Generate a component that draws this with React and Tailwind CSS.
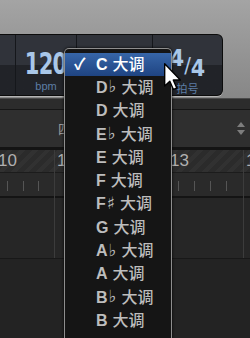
import React from 'react'

const keys = [
  ['C', ''],
  ['D', '♭'],
  ['D', ''],
  ['E', '♭'],
  ['E', ''],
  ['F', ''],
  ['F', '♯'],
  ['G', ''],
  ['A', '♭'],
  ['A', ''],
  ['B', '♭'],
  ['B', ''],
]

const ticks = [7, 23, 38, 69, 85, 100, 116, 131, 147, 178, 194, 210, 226]

function Cursor() {
  return (
    <svg className="absolute left-[164px] top-[63px]" width="18" height="28" viewBox="0 0 13 20">
      <path
        d="M0.5 0.5 L0.5 16.5 L4.2 13 L6.8 19 L9.2 18 L6.7 12.2 L11.8 12.2 Z"
        fill="#fff"
        stroke="#000"
        strokeWidth="1"
        strokeLinejoin="round"
      />
    </svg>
  )
}

export default function App() {
  return (
    <div
      className="relative h-[338px] w-[250px] overflow-hidden bg-[#232323]"
      style={{ fontFamily: '"Liberation Sans", "Noto Sans CJK SC", sans-serif' }}
    >
      {/* grey transport strip with LCD */}
      <div className="h-[98px] bg-gradient-to-b from-[#a4a4a4] to-[#878787] pt-[34px]">
        <div className="flex h-[62px] w-[223px] rounded-r-[6px] border border-l-0 border-[#0c0c0c] bg-gradient-to-b from-[#30333a] from-50% to-[#212328] to-50% shadow-[0_1px_0_#b5b5b5]">
          <div className="w-[16px] border-r border-[#15171b]" />
          <div className="flex w-[61px] flex-col items-center border-r border-[#15171b] pt-[16px]">
            <span
              className="origin-center scale-x-[0.78] text-[30px] font-bold leading-[26px] tracking-[-1px] text-[#a9c7e8]"
              style={{ fontFamily: '"Liberation Sans Narrow", "DejaVu Sans Condensed", sans-serif' }}
            >
              120
            </span>
            <span className="mt-[3px] text-[11px] leading-[12px] text-[#5d7ea5]">bpm</span>
          </div>
          <div className="w-[76px] border-r border-[#15171b]" />
          <div className="flex flex-1 flex-col items-center pt-[12px]">
            <div
              className="flex items-start font-bold text-[#a9c7e8]"
              style={{ fontFamily: '"Liberation Sans Narrow", "DejaVu Sans Condensed", sans-serif' }}
            >
              <span className="text-[23px] leading-[22px]">4</span>
              <span className="mt-[9px] text-[22px] font-normal leading-[20px]">/</span>
              <span className="mt-[10px] text-[23px] leading-[22px]">4</span>
            </div>
            <span className="mt-[4px] text-[11px] leading-[12px] text-[#5d7ea5]">拍号</span>
          </div>
        </div>
      </div>

      {/* track header area */}
      <div className="h-[11px] border-t border-[#4a4a4a] bg-[#2c2c2c]" />
      <div className="relative h-[38px] border-t border-[#161616] bg-[#2f2f2f]">
        <span className="absolute left-[58px] top-[10px] text-[13px] text-[#9a9a9a]">四分</span>
        <div className="absolute left-[237px] top-[12px] flex flex-col items-center gap-[3px]">
          <div className="h-0 w-0 border-x-[4px] border-b-[5px] border-x-transparent border-b-[#7d7d7d]" />
          <div className="h-0 w-0 border-x-[4px] border-t-[5px] border-x-transparent border-t-[#7d7d7d]" />
        </div>
      </div>
      <div className="h-[3px] bg-[#141414]" />

      {/* ruler */}
      <div className="relative h-[22px] bg-[#2b2b2b] bg-[repeating-linear-gradient(135deg,#2b2b2b_0px,#2b2b2b_5px,#313131_5px,#313131_9px)]">
        <span className="absolute left-[-2px] top-[2px] text-[17px] leading-[18px] text-[#b0b0b0]">10</span>
        <span className="absolute left-[57px] top-[2px] text-[17px] leading-[18px] text-[#b0b0b0]">11</span>
        <span className="absolute left-[170px] top-[2px] text-[17px] leading-[18px] text-[#b0b0b0]">13</span>
        <span className="absolute left-[246px] top-[2px] text-[17px] leading-[18px] text-[#b0b0b0]">14</span>
      </div>
      <div className="relative h-[24px] border-t border-[#1c1c1c] bg-[#2a2a2a]">
        {ticks.map((x) => (
          <div key={x} className="absolute top-[8px] h-[10px] w-px bg-[#555]" style={{ left: x }} />
        ))}
      </div>
      <div className="h-[2px] bg-[#141414]" />
      <div className="relative h-[61px] border-b border-[#181818] bg-[#262626]" />

      {/* bar lines */}
      <div className="absolute left-[54px] top-[150px] h-[108px] w-px bg-[#3c3c3c]" />
      <div className="absolute left-[243px] top-[150px] h-[108px] w-px bg-[#3c3c3c]" />

      {/* key pop-up menu */}
      <div className="absolute left-[64px] top-[48px] h-[300px] w-[108px] rounded-t-[5px] border border-b-0 border-[#8e8e8e] bg-[#151515] pt-[4px] shadow-[0_0_3px_#000]">
        {keys.map(([k, acc], i) => (
          <div
            key={k + acc}
            className={
              i === 0
                ? 'flex h-[23.3px] items-center bg-gradient-to-b from-[#3766a8] to-[#1f4482] text-white'
                : 'flex h-[23.3px] items-center text-[#bdbdbd]'
            }
          >
            <span className="w-[31px] pl-[9px] text-[16px] font-bold leading-none">{i === 0 ? '✓' : ''}</span>
            <span className="text-[16px] font-bold leading-none">{k}</span>
            {acc && (
              <span
                className="ml-[1px] -translate-y-[1px] text-[17px] leading-none"
                style={{ fontFamily: '"DejaVu Sans", sans-serif' }}
              >
                {acc}
              </span>
            )}
            <span className="ml-[5px] text-[16px] font-medium leading-none">大调</span>
          </div>
        ))}
      </div>

      <Cursor />
    </div>
  )
}
